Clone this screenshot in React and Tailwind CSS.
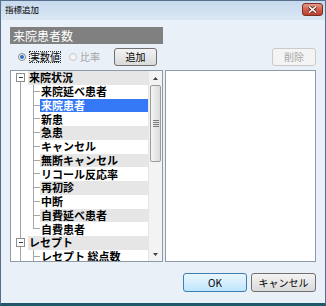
import React from "react";

const ROW_H = 13.75;
const C = ROW_H / 2;

const tree = [
  { label: "来院状況", root: true, first: true },
  { label: "来院延べ患者" },
  { label: "来院患者", selected: true },
  { label: "新患" },
  { label: "急患" },
  { label: "キャンセル" },
  { label: "無断キャンセル" },
  { label: "リコール反応率" },
  { label: "再初診" },
  { label: "中断" },
  { label: "自費延べ患者" },
  { label: "自費患者", last: true },
  { label: "レセプト", root: true },
  { label: "レセプト 総点数" },
];

const jp = { fontFamily: '"Noto Sans CJK JP", "Noto Sans", sans-serif' };

/* tree connector lines, drawn per row */
const Connector = ({ item }) => {
  if (item.root) {
    return (
      <svg width="17" height={ROW_H} className="shrink-0" shapeRendering="crispEdges">
        <line x1="9.5" y1={item.first ? C : 0} x2="9.5" y2={ROW_H} stroke="#a6a6a6" />
        <rect x="5.5" y={C - 4} width="8" height="8" fill="#fff" stroke="#8e8e8e" />
        <line x1="7.5" y1={C} x2="12" y2={C} stroke="#3a3a3a" />
      </svg>
    );
  }
  return (
    <svg width="29" height={ROW_H} className="shrink-0" shapeRendering="crispEdges">
      <line x1="9.5" y1="0" x2="9.5" y2={ROW_H} stroke="#a6a6a6" />
      <line x1="22.5" y1="0" x2="22.5" y2={item.last ? C : ROW_H} stroke="#a6a6a6" />
      <line x1="22.5" y1={C} x2="29" y2={C} stroke="#a6a6a6" />
    </svg>
  );
};

const TreeRow = ({ item, index }) => {
  const band = item.selected
    ? "bg-[#3478f6] text-white"
    : index % 2 === 0
    ? "bg-[#e6e6e6] text-black"
    : "bg-white text-black";
  return (
    <div className="flex items-stretch h-[13.75px]">
      <Connector item={item} />
      <div className={`flex-1 flex items-center pl-[1px] text-[11px] font-bold leading-none whitespace-nowrap ${band}`}>
        {item.label}
      </div>
    </div>
  );
};

const ScrollBar = () => (
  <div className="w-[14px] shrink-0 flex flex-col bg-[#f3f3f3] border-l border-[#e4e4e4]">
    <div className="h-[14px] flex items-center justify-center">
      <svg width="5" height="3"><polygon points="2.5,0 5,3 0,3" fill="#404040" /></svg>
    </div>
    <div className="h-[77px] mx-[1px] rounded-[2px] border border-[#9b9b9b] bg-gradient-to-r from-[#f5f5f5] to-[#dadada] flex items-center justify-center">
      <svg width="6" height="7" shapeRendering="crispEdges">
        <line x1="0" y1="0.5" x2="6" y2="0.5" stroke="#7a7a7a" />
        <line x1="0" y1="2.5" x2="6" y2="2.5" stroke="#7a7a7a" />
        <line x1="0" y1="4.5" x2="6" y2="4.5" stroke="#7a7a7a" />
        <line x1="0" y1="6.5" x2="6" y2="6.5" stroke="#7a7a7a" />
      </svg>
    </div>
    <div className="flex-1" />
    <div className="h-[14px] flex items-center justify-center">
      <svg width="5" height="3"><polygon points="0,0 5,0 2.5,3" fill="#404040" /></svg>
    </div>
  </div>
);

const Radio = ({ checked, disabled }) => (
  <span
    className={`w-[8px] h-[8px] rounded-full border shrink-0 flex items-center justify-center ${
      disabled ? "border-[#c9c9c9] bg-[#f4f4f4]" : "border-[#8a8a8a] bg-gradient-to-b from-[#e8e8e8] to-white"
    }`}
  >
    {checked && <span className="w-[4px] h-[4px] rounded-full bg-[#2a6fc9]" />}
  </span>
);

export default function App() {
  return (
    <div
      className="w-[326px] h-[306px] flex flex-col bg-[#e9f0f8] border border-[#54708c] border-b-[3px] border-b-[#1f5668]"
      style={jp}
    >
      {/* TITLE BAR */}
      <div className="h-[19px] flex items-start justify-between bg-gradient-to-b from-[#c7d9ed] to-[#dbe7f4]">
        <span className="ml-[4px] mt-[4px] text-[8.5px] leading-none text-black">指標追加</span>
        <div className="mt-[2px] mr-[2px] w-[21px] h-[13px] rounded-[3px] border border-[#7b3026] bg-gradient-to-b from-[#e49a88] via-[#d0604b] to-[#b8402e] flex items-center justify-center">
          <svg width="9" height="7">
            <path d="M1 0.5 L8 6.5 M8 0.5 L1 6.5" stroke="#5a2018" strokeWidth="3" />
            <path d="M1 0.5 L8 6.5 M8 0.5 L1 6.5" stroke="#fff" strokeWidth="1.6" />
          </svg>
        </div>
      </div>

      {/* CLIENT */}
      <div className="flex-1 flex flex-col pl-[9px] pr-[9px]">
        {/* Header */}
        <div className="mt-[7px] w-[153px] h-[17px] bg-[#808080] flex items-center pl-[3px] text-[12px] text-white leading-none">
          来院患者数
        </div>

        {/* Radio row */}
        <div className="mt-[4px] h-[18px] flex items-center">
          <span className="ml-[8px]"><Radio checked /></span>
          <span className="ml-[3px] w-[32px] h-[12px] flex items-center justify-center border border-dotted border-[#333] text-[10px] leading-none text-black">
            実数値
          </span>
          <span className="ml-[8px]"><Radio disabled /></span>
          <span className="ml-[3px] text-[10px] leading-none text-[#a3a3a3]">比率</span>
          <button className="ml-[14px] w-[43px] h-[18px] rounded-[3px] border border-[#707070] bg-gradient-to-b from-[#f3f3f3] to-[#dadada] text-[10px] leading-none text-black">
            追加
          </button>
          <button className="ml-auto w-[44px] h-[18px] rounded-[3px] border border-[#cacaca] bg-[#f4f4f4] text-[10px] leading-none text-[#a6a6a6]">
            削除
          </button>
        </div>

        {/* Lists */}
        <div className="mt-[4px] h-[192px] flex gap-[2px]">
          <div className="w-[153px] flex border border-[#8e9aa8] bg-white overflow-hidden">
            <div className="flex-1 flex flex-col overflow-hidden">
              {tree.map((item, i) => (
                <TreeRow key={i} item={item} index={i} />
              ))}
            </div>
            <ScrollBar />
          </div>
          <div className="flex-1 border border-[#8e9aa8] bg-white" />
        </div>

        {/* Buttons */}
        <div className="mt-[11px] h-[19px] flex justify-end gap-[4px]">
          <button className="w-[64px] h-[19px] rounded-[3px] border border-[#3c7fb1] bg-gradient-to-b from-[#eaf6fd] to-[#bee6fd] text-[10px] leading-none text-black">
            OK
          </button>
          <button className="w-[65px] h-[19px] rounded-[3px] border border-[#707070] bg-gradient-to-b from-[#f3f3f3] to-[#dadada] text-[10px] leading-none text-black">
            キャンセル
          </button>
        </div>
      </div>
    </div>
  );
}
